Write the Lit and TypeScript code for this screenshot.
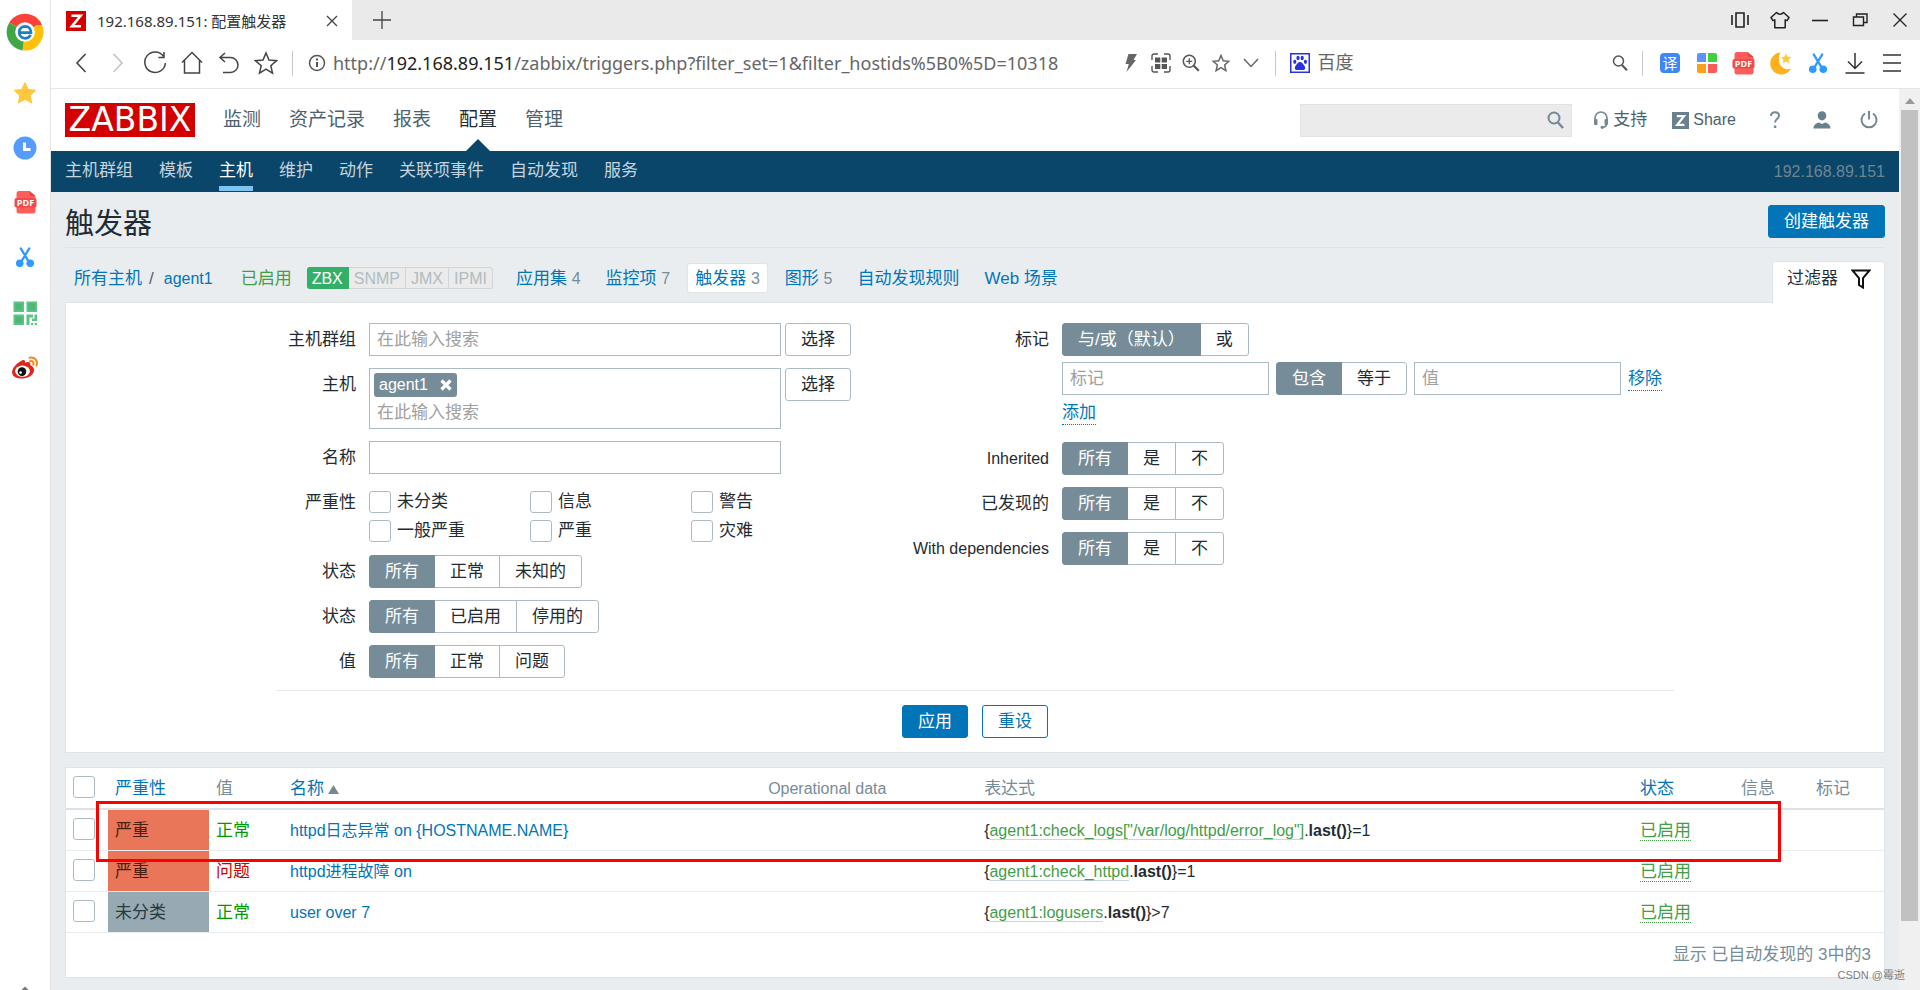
import { LitElement, html, css, svg, nothing } from "lit";
import { customElement, property, state } from "lit/decorators.js";
import { classMap } from "lit/directives/class-map.js";

const sharedStyles = css`
  *,
  *::before,
  *::after {
    box-sizing: border-box;
  }
  button,
  input {
    font: inherit;
    margin: 0;
  }
  a {
    text-decoration: none;
    color: #0275b8;
  }
`;

const scissors = svg`
  <path d="M6 1.5 14.6 15.5M15 1.5 6.4 15.5" stroke="#2f9bff" stroke-width="2.4" fill="none" stroke-linecap="round"/>
  <circle cx="5" cy="17" r="4" fill="#2f9bff"/><circle cx="16" cy="17" r="4" fill="#2f9bff"/>`;
const pdf = svg`
  <path d="M4 0h11l6 5v15a2.5 2.5 0 0 1-2.500 2.500h-14A2.500 2.500 0 0 1 2 20V2.500A2.500 2.500 0 0 1 4 0z" fill="#ff5c5c"/>
  <path d="M15 0l6 5h-4a2 2 0 0 1-2-2z" fill="#e04848"/>
  <rect x="0" y="7" width="22" height="9.500" rx="2" fill="#f04a4a"/>
  <text x="11" y="15" font-size="9" font-weight="700" text-anchor="middle" fill="#fff" font-family="Open Sans, sans-serif">PDF</text>`;

type Glyph = { w: number; h: number; box: string; body: unknown };

const glyphs: Record<string, Glyph> = {
  browser: {
    w: 38, h: 38, box: "0 0 38 38",
    body: svg`
      <path d="M19 19 3.300 9.500A18.500 18.500 0 0 1 35 10z" fill="#f9423a"/>
      <path d="M19 19 35 10A18.500 18.500 0 0 1 16.500 37.400z" fill="#ffc107"/>
      <path d="M19 19 16.500 37.400A18.500 18.500 0 0 1 3.300 9.500z" fill="#3fa845"/>
      <path d="M19 12h16.800a18 18 0 0 0-3-5z" fill="#f9423a"/>
      <circle cx="19" cy="19" r="9.800" fill="#fff"/>
      <path d="M12.600 19.600H25c0-4-2.600-6.300-6-6.300a6 6 0 1 0 5.600 8.600" fill="none" stroke="#1681c4" stroke-width="2.700"/>`,
  },
  favStar: {
    w: 24, h: 24, box: "0 0 24 24",
    body: svg`<path d="M12 1.500l3.200 6.900 7.500.9-5.500 5.200 1.500 7.500L12 18.300 5.300 22l1.500-7.500L1.300 9.300l7.500-.9z" fill="#ffc83a" stroke="#ffc83a" stroke-linejoin="round"/>`,
  },
  clock: {
    w: 24, h: 24, box: "0 0 24 24",
    body: svg`<circle cx="12" cy="12" r="11.500" fill="#549dff"/><path d="M11.500 6.500v7h6" fill="none" stroke="#fff" stroke-width="3"/>`,
  },
  pdf: { w: 23, h: 23, box: "0 0 22 23", body: pdf },
  scissors: { w: 20, h: 21, box: "0 0 21 22", body: scissors },
  qr: {
    w: 24, h: 24, box: "0 0 24 24",
    body: svg`<g fill="#59c583"><path d="M.5.500h10.500v10.500H.5zM13.500.500H24v10.500H13.500zM.5 13.500h10.500V24H.5z"/>
      <path d="M13.500 13.500H20v3h-3.500V24h-3zM21.500 13.500H24V20h-5v-2.500h2.500zM18 22h2.200v2H18zM21.800 22H24v2h-2.200z"/></g>
      <g fill="#4db878"><path d="M2.500 2.500h6.500v6.500H2.500zM15.500 2.500h6.500v6.500h-6.500zM2.500 15.500h6.500v6.500H2.500z"/></g>`,
  },
  weibo: {
    w: 28, h: 24, box: "0 0 28 24",
    body: svg`<path d="M11 4.500c2.500-1.200 3.500.2 3 2.200 3.500-1.300 6-.7 5.200 2.500 7 2.500 4.500 12.300-7.700 13.300C3 23 .5 18.500 1.200 15 2 11 7.500 5.800 11 4.500z" fill="#e2231a"/>
      <ellipse cx="11.500" cy="15.200" rx="7.400" ry="5.600" fill="#fff"/>
      <circle cx="11" cy="15.600" r="4.300" fill="#111"/><circle cx="9.600" cy="16.600" r="1.300" fill="#fff"/>
      <path d="M18.500 1.800c5.500-1.300 8.500 3.200 7 7.700M19 5.200c2.800-.5 4 1.200 3.300 3.400" fill="none" stroke="#f08a1d" stroke-width="2" stroke-linecap="round"/>`,
  },
  railMore: { w: 8, h: 5, box: "0 0 8 5", body: svg`<path d="M4 1.500 7.500 5h-7z" fill="#777"/>` },
  zFavicon: {
    w: 20, h: 20, box: "0 0 20 20",
    body: svg`<rect width="20" height="20" fill="#d40000"/><path d="M5.500 4.800h9L6 15.200h9" fill="none" stroke="#fff" stroke-width="2.600"/>`,
  },
  close: { w: 12, h: 12, box: "0 0 12 12", body: svg`<path d="M1 1l10 10M11 1 1 11" stroke="#444" stroke-width="1.300" fill="none"/>` },
  plus: { w: 18, h: 18, box: "0 0 18 18", body: svg`<path d="M9 0v18M0 9h18" stroke="#444" stroke-width="1.300" fill="none"/>` },
  split: {
    w: 20, h: 18, box: "0 0 20 18",
    body: svg`<path d="M2 4v10M18 4v10M6 2h8v14H6z" fill="none" stroke="#222" stroke-width="1.600"/>`,
  },
  shirt: {
    w: 20, h: 18, box: "0 0 20 18",
    body: svg`<path d="M6.500 1.500c1.800 2.300 5.200 2.300 7 0L19 6.500l-2 3.200-1.800-.9v8H4.800v-8L3 9.700 1 6.500z" fill="none" stroke="#222" stroke-width="1.500" stroke-linejoin="round"/>`,
  },
  minimize: { w: 16, h: 16, box: "0 0 16 16", body: svg`<path d="M0 8.500h16" stroke="#222" stroke-width="1.600"/>` },
  restore: {
    w: 16, h: 16, box: "0 0 16 16",
    body: svg`<path d="M1.500 5h10v8.500h-10zM4.500 5V2h10.500v8.500h-3.500" fill="none" stroke="#222" stroke-width="1.400"/>`,
  },
  winClose: { w: 16, h: 16, box: "0 0 16 16", body: svg`<path d="M1.500 1.500l13 13M14.500 1.500l-13 13" stroke="#222" stroke-width="1.300" fill="none"/>` },
  back: { w: 12, h: 20, box: "0 0 12 20", body: svg`<path d="M10.500 1 2 10l8.500 9" fill="none" stroke="#444" stroke-width="1.600"/>` },
  forward: { w: 12, h: 20, box: "0 0 12 20", body: svg`<path d="M1.500 1 10 10l-8.500 9" fill="none" stroke="#c4c4c4" stroke-width="1.600"/>` },
  reload: {
    w: 24, h: 24, box: "0 0 24 24",
    body: svg`<path d="M20.500 5.200A10.300 10.300 0 1 0 22.400 12M21 1v5.600h-5.600" fill="none" stroke="#444" stroke-width="1.500"/>`,
  },
  home: { w: 22, h: 24, box: "0 0 22 24", body: svg`<path d="M1 11.500 11 1.500l10 10M3.500 9.500V22h15V9.500" fill="none" stroke="#444" stroke-width="1.500"/>` },
  undo: { w: 22, h: 22, box: "0 0 22 22", body: svg`<path d="M7 1 2 5.500 7 10M2 5.500h10.500a7.500 7.500 0 0 1 0 15H5" fill="none" stroke="#444" stroke-width="1.500"/>` },
  star: {
    w: 24, h: 24, box: "0 0 24 24",
    body: svg`<path d="M12 2l3 7 7.500.7-5.700 5 1.700 7.500L12 18.200l-6.500 4 1.700-7.500-5.700-5L9 9z" fill="none" stroke="#444" stroke-width="1.500"/>`,
  },
  info: {
    w: 18, h: 18, box: "0 0 18 18",
    body: svg`<circle cx="9" cy="9" r="7.500" fill="none" stroke="#555" stroke-width="1.500"/><path d="M9 8v5M9 4.500v2" stroke="#555" stroke-width="2"/>`,
  },
  bolt: { w: 14, h: 20, box: "0 0 14 20", body: svg`<path d="M4.500 1H13L9.500 7H12L2.500 19l2.300-8H1.500z" fill="#666"/>` },
  tiles: {
    w: 20, h: 20, box: "0 0 20 20",
    body: svg`<g fill="#555"><path d="M4 4.500h5.300v5H4zM10.700 4.500H16v5h-5.300zM4 11h5.300v5H4zM10.700 11H16v5h-5.300z"/></g>
      <path d="M1 7V3a2 2 0 0 1 2-2h4M13 1h4a2 2 0 0 1 2 2v4M19 13v4a2 2 0 0 1-2 2h-4M7 19H3a2 2 0 0 1-2-2v-4" fill="none" stroke="#555" stroke-width="1.400"/>`,
  },
  zoomIn: {
    w: 18, h: 18, box: "0 0 18 18",
    body: svg`<circle cx="7.300" cy="7.300" r="6" fill="none" stroke="#555" stroke-width="1.500"/><path d="M7.300 4.300v6M4.300 7.300h6" stroke="#555" stroke-width="1.300"/><path d="m11.800 11.800 5 5" stroke="#555" stroke-width="2.200"/>`,
  },
  starSmall: {
    w: 18, h: 18, box: "0 0 24 24",
    body: svg`<path d="M12 2l3 7 7.500.7-5.700 5 1.700 7.500L12 18.200l-6.500 4 1.700-7.500-5.700-5L9 9z" fill="none" stroke="#666" stroke-width="2"/>`,
  },
  chevron: { w: 16, h: 10, box: "0 0 16 10", body: svg`<path d="m1 1 7 7.500L15 1" fill="none" stroke="#666" stroke-width="1.500"/>` },
  baidu: {
    w: 20, h: 20, box: "0 0 20 20",
    body: svg`<rect x=".75" y=".75" width="18.500" height="18.500" fill="#fff" stroke="#2a32e0" stroke-width="1.500"/>
      <g fill="#2a32e0"><ellipse cx="4.800" cy="8.800" rx="1.600" ry="2.100"/><ellipse cx="8" cy="5" rx="1.600" ry="2.200"/><ellipse cx="12.200" cy="5" rx="1.600" ry="2.200"/><ellipse cx="15.400" cy="8.800" rx="1.600" ry="2.100"/>
      <path d="M10 9c2 0 2.600 1.800 4 3.200 1.800 1.700 1.700 5-1.200 4.900-1.900-.1-3.700-.1-5.600 0-2.900.1-3-3.200-1.200-4.900C7.400 10.800 8 9 10 9z"/></g>`,
  },
  lens: {
    w: 16, h: 16, box: "0 0 16 16",
    body: svg`<circle cx="6.500" cy="6" r="5" fill="none" stroke="#555" stroke-width="1.500"/><path d="m10 10 5 5.300" stroke="#555" stroke-width="2"/>`,
  },
  translate: {
    w: 20, h: 20, box: "0 0 20 20",
    body: svg`<rect width="20" height="20" rx="4" fill="#3f86f7"/><text x="10" y="15.500" font-size="15" text-anchor="middle" fill="#fff" font-family="Noto Sans CJK SC, sans-serif">译</text>`,
  },
  apps: {
    w: 20, h: 20, box: "0 0 20 20",
    body: svg`<path d="M0 2a2 2 0 0 1 2-2h7v9H0z" fill="#5b93f7"/><path d="M11 0h7a2 2 0 0 1 2 2v7h-9z" fill="#3ed03e"/><path d="M0 11h9v9H2a2 2 0 0 1-2-2z" fill="#f9a11b"/><path d="M11 11h9v7a2 2 0 0 1-2 2h-7z" fill="#ff5a5a"/>`,
  },
  moon: {
    w: 22, h: 23, box: "0 0 22 23",
    body: svg`<path d="M10.500.5A11 11 0 1 0 21 16.500C12.500 20 5.500 10 10.500.500z" fill="#ffb11a"/><path d="M16 1.500l1.500 3.300 3.700.4-2.700 2.500.8 3.600L16 9.500l-3.300 1.800.8-3.600-2.700-2.500 3.700-.4z" fill="#ffc83a"/>`,
  },
  download: { w: 20, h: 22, box: "0 0 20 22", body: svg`<path d="M10 1v15M3 9.500l7 7 7-7M.5 21h19" fill="none" stroke="#333" stroke-width="1.500"/>` },
  menu: { w: 18, h: 20, box: "0 0 18 20", body: svg`<path d="M0 2h18M0 10h18M0 18h18" stroke="#333" stroke-width="1.600"/>` },
  search: {
    w: 17, h: 18, box: "0 0 17 18",
    body: svg`<circle cx="7" cy="7" r="5.500" fill="none" stroke="#758992" stroke-width="2"/><path d="m11 11.500 5 5.500" stroke="#758992" stroke-width="2.400"/>`,
  },
  headset: {
    w: 16, h: 18, box: "0 0 16 18",
    body: svg`<path d="M2 9V7a6 6 0 0 1 12 0v4c0 3.500-1.500 5-4 5.500" fill="none" stroke="#758992" stroke-width="1.700"/><rect x="1" y="8" width="3.500" height="6" rx="1" fill="#758992"/><rect x="11.500" y="8" width="3.500" height="6" rx="1" fill="#758992"/><circle cx="9.200" cy="16.300" r="1.600" fill="#758992"/>`,
  },
  zShare: {
    w: 17, h: 17, box: "0 0 17 17",
    body: svg`<rect width="17" height="17" fill="#69808d"/><path d="M4.800 4.200h7.200L5.200 12.800h7.200" fill="none" stroke="#fff" stroke-width="2.200"/>`,
  },
  help: {
    w: 12, h: 18, box: "0 0 12 18",
    body: svg`<path d="M2 5c0-2.500 1.500-3.800 4-3.800S10 2.500 10 4.800C10 7.500 6 8 6 11.500" fill="none" stroke="#758992" stroke-width="2"/><path d="M4.900 14.500h2.400V17H4.900z" fill="#758992"/>`,
  },
  person: {
    w: 18, h: 18, box: "0 0 18 18",
    body: svg`<ellipse cx="9" cy="4.800" rx="4.300" ry="4.600" fill="#69808d"/><path d="M.5 17.500c0-3.500 2.500-5.500 5.500-6l3 1.500 3-1.500c3 .5 5.500 2.500 5.500 6z" fill="#69808d"/>`,
  },
  power: {
    w: 18, h: 18, box: "0 0 18 18",
    body: svg`<path d="M5 2.500a7.500 7.500 0 1 0 8 0M9 0v8.500" fill="none" stroke="#758992" stroke-width="2"/>`,
  },
  funnel: { w: 20, h: 20, box: "0 0 20 20", body: svg`<path d="M1.500 1.500h17L12 9v9.500L8 16V9z" fill="none" stroke="#111" stroke-width="2"/>` },
  remove: { w: 12, h: 12, box: "0 0 12 12", body: svg`<path d="m1.500 1.500 9 9M10.500 1.500l-9 9" stroke="#fff" stroke-width="3.200"/>` },
  sortUp: { w: 11, h: 9, box: "0 0 11 9", body: svg`<path d="M5.500 0 11 9H0z" fill="#758992"/>` },
  scrollUp: { w: 10, h: 6, box: "0 0 10 6", body: svg`<path d="M5 0l5 6H0z" fill="#9a9a9a"/>` },
};

@customElement("ui-icon")
class UiIcon extends LitElement {
  @property() name = "";
  static styles = css`
    :host {
      display: inline-flex;
      flex: none;
    }
    .glyph {
      display: block;
    }
  `;
  render() {
    const g = glyphs[this.name];
    if (!g) return nothing;
    return html`<svg class="glyph" width=${g.w} height=${g.h} viewBox=${g.box} aria-hidden="true">${g.body}</svg>`;
  }
}

@customElement("segment-control")
class SegmentControl extends LitElement {
  @property() label = "";
  @property({ type: Array }) options: string[] = [];
  @state() private selected = 0;

  static styles = [
    sharedStyles,
    css`
      :host {
        display: inline-flex;
        vertical-align: top;
      }
      .group {
        display: flex;
        margin: 0;
        padding: 0;
        border: 0;
      }
      .radio {
        appearance: none;
        position: absolute;
        width: 0;
        height: 0;
      }
      .option {
        height: 33px;
        padding: 0 15px;
        border: 1px solid #acbbc2;
        background: #fff;
        color: #1f2c33;
        font-size: 17px;
        line-height: 32px;
        white-space: nowrap;
        cursor: pointer;
      }
      .option + .radio + .option {
        margin-left: -1px;
      }
      .first {
        border-radius: 3px 0 0 3px;
      }
      .last {
        border-radius: 0 3px 3px 0;
      }
      .radio:checked + .option {
        position: relative;
        background: #768d99;
        border-color: #768d99;
        color: #fff;
      }
    `,
  ];
  render() {
    return html`<div class="group" role="radiogroup" aria-label=${this.label}>
      ${this.options.map(
        (o, i) => html`<input class="radio" type="radio" name="seg" id="o${i}" .checked=${this.selected === i} @change=${() => (this.selected = i)} /><label
            class=${classMap({ option: true, first: i === 0, last: i === this.options.length - 1 })}
            for="o${i}"
            >${o}</label
          >`
      )}
    </div>`;
  }
}

const topMenu = ["监测", "资产记录", "报表", "配置", "管理"];
const subMenu = ["主机群组", "模板", "主机", "维护", "动作", "关联项事件", "自动发现", "服务"];
const hostTabs: { name: string; count?: number }[] = [
  { name: "应用集", count: 4 },
  { name: "监控项", count: 7 },
  { name: "触发器", count: 3 },
  { name: "图形", count: 5 },
  { name: "自动发现规则" },
  { name: "Web 场景" },
];
const severities = ["未分类", "信息", "警告", "一般严重", "严重", "灾难"];
const triggers = [
  { severity: "严重", high: true, value: "正常", ok: true, name: "httpd日志异常 on {HOSTNAME.NAME}", item: 'agent1:check_logs["/var/log/httpd/error_log"]', tail: "=1" },
  { severity: "严重", high: true, value: "问题", ok: false, name: "httpd进程故障 on", item: "agent1:check_httpd", tail: "=1" },
  { severity: "未分类", high: false, value: "正常", ok: true, name: "user over 7", item: "agent1:logusers", tail: ">7" },
];

@customElement("app-root")
class AppRoot extends LitElement {
  static styles = [
    sharedStyles,
    css`
      :host {
        display: flex;
        position: relative;
        min-height: 100vh;
        background: #fff;
        color: #1f2c33;
        font-family: "Liberation Sans", "Noto Sans CJK SC", sans-serif;
        font-size: 17px;
        line-height: 24px;
      }
      .rail {
        flex: none;
        display: flex;
        flex-direction: column;
        align-items: center;
        width: 51px;
        padding-top: 12px;
        border-right: 1px solid #e4e4e4;
      }
      .rail-btn,
      .icon-btn {
        display: flex;
        align-items: center;
        justify-content: center;
        flex: none;
        padding: 0;
        border: 0;
        background: none;
      }
      .rail-btn {
        width: 50px;
        height: 55px;
      }
      .rail-btn.brand {
        height: 39px;
        margin-bottom: 14px;
      }
      .rail-more {
        width: 50px;
        margin-top: auto;
      }
      .window {
        flex: 1;
        min-width: 0;
        display: flex;
        flex-direction: column;
      }

      .tabs {
        display: flex;
        align-items: center;
        height: 40px;
        background: #eaeaea;
      }
      .tab {
        display: flex;
        align-items: center;
        align-self: stretch;
        width: 301px;
        padding: 2px 14px 0 15px;
        background: #fff;
        color: #333;
        font-family: "Noto Sans", "Noto Sans CJK SC", sans-serif;
        font-size: 15px;
      }
      .tab-title {
        flex: 1;
        padding-left: 11px;
        white-space: nowrap;
      }
      .new-tab {
        width: 60px;
        height: 38px;
      }
      .win-btns {
        display: flex;
        margin-left: auto;
      }
      .win-btn {
        width: 40px;
        height: 40px;
      }
      .toolbar {
        display: flex;
        align-items: center;
        height: 49px;
        padding: 0 10px 2px 11px;
        border-bottom: 1px solid #e6e6e6;
      }
      .tool {
        width: 37px;
        height: 40px;
      }
      .rule {
        flex: none;
        width: 1px;
        height: 25px;
        background: #c8c8c8;
      }
      .rule.lead {
        margin-left: 8px;
      }
      .address {
        flex: 996;
        display: flex;
        align-items: center;
        min-width: 0;
        padding: 0 9px 0 15px;
        color: #666;
        font-family: "Noto Sans", sans-serif;
        font-size: 18px;
      }
      .url {
        flex: 1;
        min-width: 0;
        overflow: hidden;
        padding-left: 7px;
        white-space: nowrap;
      }
      .url-host {
        color: #222;
      }
      .mini {
        width: 30px;
        height: 30px;
      }
      .engine {
        flex: 352;
        display: flex;
        align-items: center;
        gap: 8px;
        padding: 0 14px;
        color: #666;
        font-size: 18px;
      }
      .engine-go {
        margin-left: auto;
      }
      .tools {
        display: flex;
        padding-left: 8px;
      }

      .viewport {
        flex: 1;
        display: flex;
      }
      .page {
        flex: 1;
        min-width: 0;
        background: #e9edf0;
      }
      .scrollbar {
        flex: none;
        display: flex;
        flex-direction: column;
        align-items: center;
        width: 21px;
        background: #f0f0f0;
      }
      .scroll-arrow {
        display: flex;
        align-items: center;
        flex: none;
        height: 21px;
        padding-top: 2px;
      }
      .thumb {
        width: 17px;
        height: 90%;
        background: #c1c1c1;
      }

      .header {
        display: flex;
        align-items: center;
        height: 62px;
        padding: 0 20px 0 14px;
        background: #fff;
      }
      .logo {
        width: 130px;
        height: 34px;
        background: #d40000;
        color: #fff;
        font-family: "DejaVu Sans", sans-serif;
        font-size: 33px;
        line-height: 34px;
        text-align: center;
      }
      .top-menu {
        display: flex;
        gap: 28px;
        padding-left: 28px;
        font-size: 19px;
        line-height: 62px;
      }
      .top-link {
        position: relative;
        color: #4d626e;
      }
      .top-link.active {
        color: #1f2c33;
      }
      .top-link.active::after {
        content: "";
        position: absolute;
        left: 50%;
        bottom: 0;
        margin-left: -12px;
        border: 12px solid transparent;
        border-top: 0;
        border-bottom-color: #0a466a;
      }
      .search {
        display: flex;
        align-items: center;
        width: 272px;
        height: 33px;
        margin-left: auto;
        padding-right: 7px;
        border: 1px solid #e0e4e7;
        background: #ebebeb;
      }
      .search-input {
        flex: 1;
        min-width: 0;
        height: 31px;
        border: 0;
        background: none;
        outline: 0;
      }
      .support {
        display: flex;
        align-items: center;
        gap: 4px;
        margin-left: 21px;
        color: #4d626e;
      }
      .share {
        margin-left: 25px;
        font-size: 16px;
      }
      .user-btns {
        display: flex;
        gap: 27px;
        margin-left: 29px;
      }
      .user-btn {
        width: 20px;
        height: 30px;
      }

      .subnav {
        display: flex;
        gap: 26px;
        height: 41px;
        padding: 0 14px;
        background: #0a466a;
        line-height: 40px;
      }
      .sub-link {
        height: 40px;
        color: #c5d4de;
      }
      .sub-link.active {
        color: #fff;
        border-bottom: 5px solid #7ec4f2;
      }
      .server {
        margin-left: auto;
        color: #6f8590;
        font-size: 16px;
        line-height: 41px;
      }

      .content {
        padding: 0 14px 12px;
      }
      .title-row {
        display: flex;
        align-items: center;
        justify-content: space-between;
        height: 56px;
        padding-top: 4px;
        border-bottom: 1px solid #dfe4e7;
      }
      .title {
        margin: 0;
        padding-top: 4px;
        font-size: 29px;
        font-weight: 400;
        line-height: 40px;
      }
      .btn {
        height: 33px;
        padding: 1px 15px 0;
        border: 1px solid #acbbc2;
        border-radius: 3px;
        background: #fff;
        color: #1f2c33;
        line-height: 30px;
        white-space: nowrap;
      }
      .btn.primary {
        background: #0275b8;
        border-color: #0275b8;
        color: #fff;
      }
      .btn.outline {
        border-color: #0275b8;
        color: #0275b8;
      }

      .host-row {
        display: flex;
        align-items: flex-start;
        padding: 15px 0 0 9px;
        height: 54px;
        line-height: 32px;
        white-space: nowrap;
      }
      .crumb-sep {
        padding: 0 10px 0 7px;
        color: #4d626e;
      }
      .latin {
        font-size: 16px;
      }
      .enabled {
        padding-left: 28px;
        color: #429e47;
      }
      .badges {
        display: flex;
        height: 22px;
        margin: 4px 15px 0 15px;
        font-size: 16px;
        line-height: 21px;
      }
      .badge {
        padding: 0 5px;
        border: 1px solid #cfd6da;
        border-left-width: 0;
        background: #ebebeb;
        color: #b0bcc2;
      }
      .badge.on {
        border-color: #34af67;
        border-radius: 3px 0 0 3px;
        background: #34af67;
        color: #fff;
      }
      .badge:last-child {
        border-radius: 0 3px 3px 0;
      }
      .host-tabs {
        display: flex;
        gap: 9px;
      }
      .host-tab {
        height: 30px;
        padding: 0 7px;
        border: 1px solid transparent;
        border-radius: 3px;
        line-height: 29px;
      }
      .host-tab.active {
        background: #fff;
        border-color: #dfe4e7;
      }
      .count {
        color: #768d99;
        font-size: 16px;
      }
      .filter-tab {
        position: relative;
        display: flex;
        align-items: center;
        gap: 13px;
        height: 43px;
        margin: -2px 0 -4px auto;
        padding: 0 13px 8px 14px;
        border: 1px solid #dfe4e7;
        border-bottom: 0;
        border-radius: 3px 3px 0 0;
        background: #fff;
        color: #1f2c33;
      }

      .filter {
        padding: 20px 20px 14px;
        border: 1px solid #dfe4e7;
        background: #fff;
      }
      .filter-form {
        max-width: 1398px;
        margin: 0 auto;
      }
      .filter-cols {
        display: grid;
        grid-template-columns: minmax(0, 575px) 1fr;
        gap: 12px;
        padding-bottom: 12px;
        border-bottom: 1px solid #e6eaec;
      }
      .fields {
        display: flex;
        flex-direction: column;
        gap: 12px;
      }
      .field {
        display: grid;
        grid-template-columns: 80px minmax(0, 1fr);
        gap: 13px;
      }
      .fields.wide .field {
        grid-template-columns: 186px minmax(0, 1fr);
      }
      .field-label {
        line-height: 33px;
        text-align: right;
        white-space: nowrap;
      }
      .control {
        display: flex;
        align-items: flex-start;
        gap: 4px;
      }
      .text {
        height: 33px;
        padding: 0 7px;
        border: 1px solid #acbbc2;
        background: #fff;
        color: #1f2c33;
      }
      .text::placeholder,
      .bare::placeholder {
        color: #a0a0a0;
        opacity: 1;
      }
      .long {
        width: 412px;
      }
      .multi {
        display: flex;
        flex-direction: column;
        align-items: flex-start;
        width: 412px;
        padding: 4px 4px 3px;
        border: 1px solid #acbbc2;
      }
      .chip {
        display: flex;
        align-items: center;
        gap: 12px;
        height: 24px;
        padding: 0 5px;
        border-radius: 3px;
        background: #768d99;
        color: #fff;
        font-size: 16px;
      }
      .bare {
        width: 100%;
        height: 28px;
        padding: 3px 3px 0;
        border: 0;
        outline: 0;
        background: none;
      }
      .checks {
        display: grid;
        grid-template-columns: repeat(3, 161px);
        row-gap: 7px;
        padding: 5px 0 1px;
      }
      .check {
        display: flex;
        align-items: center;
        gap: 6px;
        height: 22px;
        line-height: 26px;
      }
      .box {
        appearance: none;
        flex: none;
        display: block;
        width: 22px;
        height: 22px;
        border: 1px solid #acbbc2;
        border-radius: 3px;
        background: #fff;
      }
      .tag-rules {
        display: flex;
        flex-direction: column;
        align-items: flex-start;
        gap: 6px;
      }
      .tag-line {
        display: flex;
        align-items: center;
        gap: 7px;
      }
      .tag-text {
        width: 207px;
      }
      .dotted {
        border-bottom: 1px dotted currentColor;
        line-height: 23px;
      }
      .tag-rules .add {
        margin-bottom: 5px;
      }
      .actions {
        display: flex;
        justify-content: center;
        gap: 14px;
        padding-top: 14px;
      }

      .list {
        position: relative;
        margin-top: 14px;
        border: 1px solid #dfe4e7;
        background: #fff;
      }
      .grid {
        width: 100%;
        table-layout: fixed;
        border-collapse: separate;
        border-spacing: 0;
      }
      .c-check {
        width: 42px;
      }
      .c-sev,
      .c-status {
        width: 101px;
      }
      .c-value {
        width: 74px;
      }
      .c-name {
        width: 26.3%;
      }
      .c-op {
        width: 216px;
      }
      .c-info,
      .c-tags {
        width: 75px;
      }
      .th,
      .td {
        height: 41px;
        padding: 1px 7px 0;
        border-bottom: 1px solid #e9edf0;
        text-align: left;
        font-weight: 400;
        white-space: nowrap;
      }
      .th {
        height: 42px;
        border-bottom: 2px solid #dce2e5;
        color: #768d99;
      }
      .pick {
        padding: 0 7px 2px;
      }
      .sev {
        background: #97aab3;
        color: #2a3940;
      }
      .sev.high {
        background: #e97659;
        color: #4b1e10;
      }
      .ok {
        color: #009900;
      }
      .bad {
        color: #cc0000;
      }
      .item {
        color: #429e47;
        border-bottom: 1px solid #c8d6dd;
      }
      .state {
        color: #429e47;
      }
      .sort {
        margin-left: 4px;
      }
      .summary {
        padding: 0 13px;
        color: #768d99;
        line-height: 44px;
        text-align: right;
      }
      .marker {
        position: absolute;
        top: 33px;
        left: 30px;
        right: 103px;
        height: 61px;
        border: 3px solid #fe0000;
        pointer-events: none;
      }
      .watermark {
        position: absolute;
        right: 15px;
        bottom: 3px;
        color: #7d7d7d;
        font-size: 11px;
        line-height: 24px;
      }
    `,
  ];

  private iconBtn(name: string, label: string, cls: string) {
    return html`<button class="icon-btn ${cls}" type="button" aria-label=${label}><ui-icon name=${name}></ui-icon></button>`;
  }

  private field(label: string, control: unknown, id?: string) {
    const cls = classMap({ "field-label": true, latin: /^[A-Z]/.test(label) });
    return html`<div class="field">
      ${id ? html`<label class=${cls} for=${id}>${label}</label>` : html`<span class=${cls}>${label}</span>`}
      <div class="control">${control}</div>
    </div>`;
  }

  private segments(label: string, options: string[]) {
    return html`<segment-control .label=${label} .options=${options}></segment-control>`;
  }

  private renderChrome() {
    return html`
      <div class="tabs">
        <div class="tab">
          <ui-icon name="zFavicon"></ui-icon>
          <span class="tab-title">192.168.89.151: 配置触发器</span>
          ${this.iconBtn("close", "关闭标签页", "")}
        </div>
        ${this.iconBtn("plus", "新标签页", "new-tab")}
        <div class="win-btns">
          ${this.iconBtn("split", "分屏", "win-btn")} ${this.iconBtn("shirt", "皮肤", "win-btn")}
          ${this.iconBtn("minimize", "最小化", "win-btn")} ${this.iconBtn("restore", "还原", "win-btn")}
          ${this.iconBtn("winClose", "关闭", "win-btn")}
        </div>
      </div>
      <div class="toolbar">
        ${this.iconBtn("back", "后退", "tool")} ${this.iconBtn("forward", "前进", "tool")}
        ${this.iconBtn("reload", "刷新", "tool")} ${this.iconBtn("home", "主页", "tool")}
        ${this.iconBtn("undo", "恢复", "tool")} ${this.iconBtn("star", "收藏", "tool")}
        <span class="rule lead"></span>
        <div class="address">
          <ui-icon name="info"></ui-icon>
          <span class="url">http://<span class="url-host">192.168.89.151</span>/zabbix/triggers.php?filter_set=1&amp;filter_hostids%5B0%5D=10318</span>
          ${this.iconBtn("bolt", "极速", "mini")} ${this.iconBtn("tiles", "二维码", "mini")}
          ${this.iconBtn("zoomIn", "放大", "mini")} ${this.iconBtn("starSmall", "收藏网页", "mini")}
          ${this.iconBtn("chevron", "展开", "mini")}
        </div>
        <span class="rule"></span>
        <div class="engine">
          <ui-icon name="baidu"></ui-icon>
          <span>百度</span>
          ${this.iconBtn("lens", "搜索", "engine-go")}
        </div>
        <span class="rule"></span>
        <div class="tools">
          ${this.iconBtn("translate", "翻译", "tool")} ${this.iconBtn("apps", "应用", "tool")}
          ${this.iconBtn("pdf", "PDF", "tool")} ${this.iconBtn("moon", "夜间", "tool")}
          ${this.iconBtn("scissors", "截图", "tool")} ${this.iconBtn("download", "下载", "tool")}
          ${this.iconBtn("menu", "菜单", "tool")}
        </div>
      </div>
    `;
  }

  private renderHeader() {
    return html`
      <header class="header">
        <a class="logo" href="#">ZABBIX</a>
        <nav class="top-menu">
          ${topMenu.map((m) => html`<a class=${classMap({ "top-link": true, active: m === "配置" })} href="#">${m}</a>`)}
        </nav>
        <form class="search">
          <input class="search-input" type="text" aria-label="搜索" />
          ${this.iconBtn("search", "搜索", "")}
        </form>
        <a class="support" href="#"><ui-icon name="headset"></ui-icon>支持</a>
        <a class="support share" href="#"><ui-icon name="zShare"></ui-icon>Share</a>
        <div class="user-btns">
          ${this.iconBtn("help", "帮助", "user-btn")} ${this.iconBtn("person", "用户", "user-btn")}
          ${this.iconBtn("power", "退出", "user-btn")}
        </div>
      </header>
      <nav class="subnav">
        ${subMenu.map((m) => html`<a class=${classMap({ "sub-link": true, active: m === "主机" })} href="#">${m}</a>`)}
        <span class="server">192.168.89.151</span>
      </nav>
    `;
  }

  private renderFilter() {
    return html`
      <section class="filter">
        <form class="filter-form">
          <div class="filter-cols">
            <div class="fields">
              ${this.field("主机群组", html`<input class="text long" id="groups" type="text" placeholder="在此输入搜索" /><button class="btn" type="button">选择</button>`, "groups")}
              ${this.field(
                "主机",
                html`<div class="multi">
                    <span class="chip">agent1 ${this.iconBtn("remove", "移除 agent1", "")}</span>
                    <input class="bare" id="hosts" type="text" placeholder="在此输入搜索" />
                  </div>
                  <button class="btn" type="button">选择</button>`,
                "hosts"
              )}
              ${this.field("名称", html`<input class="text long" id="name" type="text" />`, "name")}
              ${this.field(
                "严重性",
                html`<div class="checks">
                  ${severities.map((s) => html`<label class="check"><input class="box" type="checkbox" />${s}</label>`)}
                </div>`
              )}
              ${this.field("状态", this.segments("状态", ["所有", "正常", "未知的"]))}
              ${this.field("状态", this.segments("状态", ["所有", "已启用", "停用的"]))}
              ${this.field("值", this.segments("值", ["所有", "正常", "问题"]))}
            </div>
            <div class="fields wide">
              ${this.field(
                "标记",
                html`<div class="tag-rules">
                  ${this.segments("标记", ["与/或（默认）", "或"])}
                  <div class="tag-line">
                    <input class="text tag-text" type="text" aria-label="标记" placeholder="标记" />
                    ${this.segments("运算符", ["包含", "等于"])}
                    <input class="text tag-text" type="text" aria-label="值" placeholder="值" />
                    <a class="dotted" href="#">移除</a>
                  </div>
                  <a class="dotted add" href="#">添加</a>
                </div>`
              )}
              ${this.field("Inherited", this.segments("Inherited", ["所有", "是", "不"]))}
              ${this.field("已发现的", this.segments("已发现的", ["所有", "是", "不"]))}
              ${this.field("With dependencies", this.segments("With dependencies", ["所有", "是", "不"]))}
            </div>
          </div>
          <div class="actions">
            <button class="btn primary" type="button">应用</button>
            <button class="btn outline" type="button">重设</button>
          </div>
        </form>
      </section>
    `;
  }

  private renderTable() {
    return html`
      <section class="list">
        <table class="grid">
          <thead>
            <tr>
              <th class="th pick c-check"><input class="box" type="checkbox" aria-label="全选" /></th>
              <th class="th c-sev"><a href="#">严重性</a></th>
              <th class="th c-value">值</th>
              <th class="th c-name"><a href="#">名称<ui-icon class="sort" name="sortUp"></ui-icon></a></th>
              <th class="th c-op latin">Operational data</th>
              <th class="th">表达式</th>
              <th class="th c-status"><a href="#">状态</a></th>
              <th class="th c-info">信息</th>
              <th class="th c-tags">标记</th>
            </tr>
          </thead>
          <tbody>
            ${triggers.map(
              (t) => html`<tr>
                <td class="td pick"><input class="box" type="checkbox" aria-label=${t.name} /></td>
                <td class=${classMap({ td: true, sev: true, high: t.high })}>${t.severity}</td>
                <td class=${classMap({ td: true, ok: t.ok, bad: !t.ok })}>${t.value}</td>
                <td class="td latin"><a href="#">${t.name}</a></td>
                <td class="td"></td>
                <td class="td latin">{<a class="item" href="#">${t.item}</a>.<b>last()</b>}${t.tail}</td>
                <td class="td"><a class="dotted state" href="#">已启用</a></td>
                <td class="td"></td>
                <td class="td"></td>
              </tr>`
            )}
          </tbody>
        </table>
        <div class="summary">显示 已自动发现的 3中的3</div>
        <div class="marker"></div>
      </section>
    `;
  }

  render() {
    return html`
      <aside class="rail">
        ${this.iconBtn("browser", "浏览器", "rail-btn brand")} ${this.iconBtn("favStar", "收藏夹", "rail-btn")}
        ${this.iconBtn("clock", "历史", "rail-btn")} ${this.iconBtn("pdf", "PDF", "rail-btn")}
        ${this.iconBtn("scissors", "截图", "rail-btn")} ${this.iconBtn("qr", "二维码", "rail-btn")}
        ${this.iconBtn("weibo", "微博", "rail-btn")} ${this.iconBtn("railMore", "更多", "rail-more")}
      </aside>
      <div class="window">
        ${this.renderChrome()}
        <div class="viewport">
          <div class="page">
            ${this.renderHeader()}
            <main class="content">
              <div class="title-row">
                <h1 class="title">触发器</h1>
                <button class="btn primary" type="button">创建触发器</button>
              </div>
              <div class="host-row">
                <a href="#">所有主机</a><span class="crumb-sep">/</span><a class="latin" href="#">agent1</a>
                <span class="enabled">已启用</span>
                <div class="badges">
                  <span class="badge on">ZBX</span><span class="badge">SNMP</span><span class="badge">JMX</span><span class="badge">IPMI</span>
                </div>
                <nav class="host-tabs">
                  ${hostTabs.map(
                    (t) => html`<a class=${classMap({ "host-tab": true, active: t.name === "触发器" })} href="#"
                      >${t.name}${t.count ? html` <span class="count">${t.count}</span>` : nothing}</a
                    >`
                  )}
                </nav>
                <a class="filter-tab" href="#">过滤器<ui-icon name="funnel"></ui-icon></a>
              </div>
              ${this.renderFilter()} ${this.renderTable()}
            </main>
          </div>
          <div class="scrollbar">
            <span class="scroll-arrow"><ui-icon name="scrollUp"></ui-icon></span>
            <div class="thumb"></div>
          </div>
        </div>
      </div>
      <span class="watermark">CSDN @霉逝</span>
    `;
  }
}
